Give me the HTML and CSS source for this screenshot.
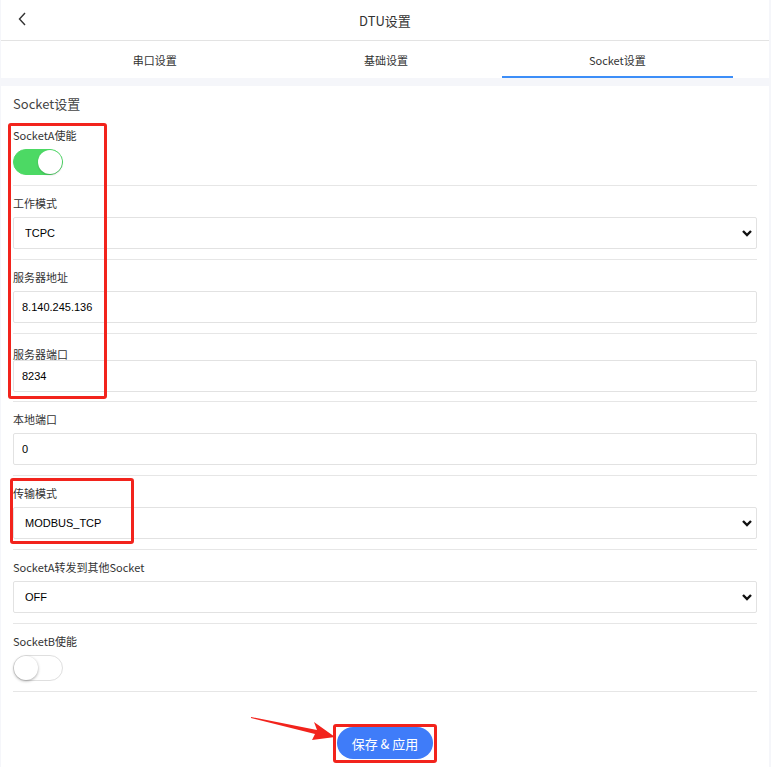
FILE: index.html
```html
<!DOCTYPE html>
<html lang="zh-CN">

<head>
    <meta charset="UTF-8">
    <meta name="viewport" content="width=device-width, initial-scale=1.0">
    <title>DTU设置</title>
    <link rel="stylesheet" href="styles.css">
</head>

<body>
    <div class="app">
        <!-- Top bar -->
        <header class="nav-bar">
            <span class="back">
                <svg width="9" height="14" viewBox="0 0 9 14"><path d="M7 1 L1.5 7 L7 13" fill="none" stroke="#333" stroke-width="1.4"/></svg>
            </span>
            <h1>DTU设置</h1>
            <span></span>
        </header>

        <!-- Tabs -->
        <nav class="tabs">
            <div class="tab">串口设置</div>
            <div class="tab">基础设置</div>
            <div class="tab active">Socket设置</div>
        </nav>

        <main class="panel">
            <h2 class="panel-title">Socket设置</h2>

            <div class="field first">
                <label>SocketA使能</label>
                <div class="switch on"><span class="knob"></span></div>
            </div>

            <div class="field">
                <label>工作模式</label>
                <div class="select">
                    <select><option>TCPC</option></select>
                    <svg width="10" height="7" viewBox="0 0 10 7"><path d="M1 1 L5 5 L9 1" fill="none" stroke="#111" stroke-width="2.4"/></svg>
                </div>
            </div>

            <div class="field">
                <label>服务器地址</label>
                <input class="text-input" type="text" value="8.140.245.136">
            </div>

            <div class="field tight">
                <label>服务器端口</label>
                <input class="text-input" type="text" value="8234">
            </div>

            <div class="field">
                <label>本地端口</label>
                <input class="text-input" type="text" value="0">
            </div>

            <div class="field">
                <label>传输模式</label>
                <div class="select">
                    <select><option>MODBUS_TCP</option></select>
                    <svg width="10" height="7" viewBox="0 0 10 7"><path d="M1 1 L5 5 L9 1" fill="none" stroke="#111" stroke-width="2.4"/></svg>
                </div>
            </div>

            <div class="field">
                <label>SocketA转发到其他Socket</label>
                <div class="select">
                    <select><option>OFF</option></select>
                    <svg width="10" height="7" viewBox="0 0 10 7"><path d="M1 1 L5 5 L9 1" fill="none" stroke="#111" stroke-width="2.4"/></svg>
                </div>
            </div>

            <div class="field">
                <label>SocketB使能</label>
                <div class="switch"><span class="knob"></span></div>
            </div>

            <div class="actions">
                <button class="btn-save">保存 &amp; 应用</button>
            </div>
        </main>
    </div>

    <!-- Red annotation marks drawn over the screenshot -->
    <div class="mark mark-a"></div>
    <div class="mark mark-b"></div>
    <div class="mark mark-c"></div>
    <svg class="arrow" width="90" height="30" viewBox="0 0 90 30">
        <polygon points="0,2 66,15 63,7 84,22 61,25 64,19 0,3" fill="#f2231c"/>
    </svg>
</body>

</html>
```

FILE: styles.css
```css
body {
    margin: 0;
    background-color: #f5f6fa;
    font-family: "Noto Sans CJK SC", "Noto Sans", sans-serif;
    color: #333;
}

.app {
    margin: 0 2px 0 1px;
}

/* top bar */
.nav-bar {
    display: grid;
    grid-template-columns: 60px 1fr 60px;
    align-items: center;
    height: 40px;
    background-color: white;
    border-bottom: 1px solid #e3e3e3;
}

.nav-bar .back {
    display: flex;
    padding-left: 17px;
    margin-top: -3px;
}

.nav-bar h1 {
    margin: 0;
    text-align: center;
    font-size: 13px;
    font-weight: normal;
    color: #333;
}

/* tabs */
.tabs {
    display: flex;
    padding: 4px 36px 0 38px;
    background-color: white;
    margin-bottom: 8px;
}

.tab {
    flex: 1;
    text-align: center;
    font-size: 11px;
    line-height: 31px;
    border-bottom: 2px solid transparent;
}

.tab.active {
    border-bottom-color: #3d8ef8;
}

/* content */
.panel {
    background-color: white;
    padding: 8px 12px 8px 12px;
}

.panel-title {
    margin: 0;
    font-size: 13px;
    font-weight: normal;
    line-height: 20px;
    color: #444;
}

.field {
    padding: 10px 0 10px;
    border-bottom: 1px solid #e6e6e6;
}

.field.first {
    padding-top: 14px;
}

.field label {
    display: block;
    font-size: 11px;
    line-height: 14px;
    margin-bottom: 7px;
    color: #333;
}

.field.tight {
    padding: 14px 0 9px;
}

.field.tight label {
    line-height: 12px;
    margin-bottom: 0;
}

.text-input,
.select {
    box-sizing: border-box;
    width: 100%;
    height: 32px;
    border: 1px solid #e2e2e2;
    border-radius: 2px;
    background: white;
    font-family: "Liberation Sans", Arial, sans-serif;
    font-size: 11px;
    color: #000;
}

.text-input {
    display: block;
    padding: 0 8px;
    outline: none;
}

.select {
    display: flex;
    align-items: center;
    padding-right: 4px;
}

.select select {
    flex: 1;
    height: 100%;
    appearance: none;
    -webkit-appearance: none;
    border: none;
    background: transparent;
    padding: 0 11px;
    font-family: inherit;
    font-size: 11px;
    color: #000;
    outline: none;
}

/* switches */
.switch {
    box-sizing: border-box;
    width: 50px;
    height: 26px;
    border-radius: 13px;
    border: 1px solid #dfdfdf;
    background-color: white;
    display: flex;
    align-items: center;
}

.switch .knob {
    width: 24px;
    height: 24px;
    border-radius: 50%;
    background-color: white;
    box-shadow: 0 1px 3px rgba(0, 0, 0, 0.35);
}

.switch.on {
    background-color: #4cd964;
    border-color: #4cd964;
    justify-content: flex-end;
}

.switch.on .knob {
    box-shadow: 0 1px 2px rgba(0, 0, 0, 0.2);
}

/* save */
.actions {
    display: flex;
    justify-content: center;
    padding-top: 35px;
}

.btn-save {
    width: 96px;
    height: 32px;
    border: none;
    border-radius: 16px;
    background-color: #3f7cf9;
    color: white;
    font-family: "Noto Sans CJK SC", sans-serif;
    font-size: 13px;
    cursor: pointer;
}

/* annotations */
.mark {
    position: absolute;
    border: 3px solid #f2231c;
    border-radius: 3px;
    box-sizing: border-box;
}

.mark-a {
    left: 8px;
    top: 123px;
    width: 99px;
    height: 276px;
}

.mark-b {
    left: 10px;
    top: 478px;
    width: 124px;
    height: 66px;
}

.mark-c {
    left: 333px;
    top: 724px;
    width: 104px;
    height: 39px;
}

.arrow {
    position: absolute;
    left: 251px;
    top: 715px;
}
```
